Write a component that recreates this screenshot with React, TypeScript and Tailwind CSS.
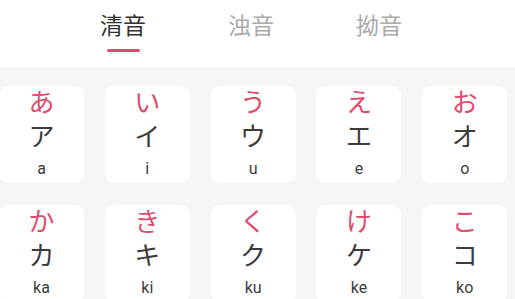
import React from "react";

const tabs = ["清音", "浊音", "拗音"];

const rows = [
  [
    { h: "あ", k: "ア", r: "a" },
    { h: "い", k: "イ", r: "i" },
    { h: "う", k: "ウ", r: "u" },
    { h: "え", k: "エ", r: "e" },
    { h: "お", k: "オ", r: "o" },
  ],
  [
    { h: "か", k: "カ", r: "ka" },
    { h: "き", k: "キ", r: "ki" },
    { h: "く", k: "ク", r: "ku" },
    { h: "け", k: "ケ", r: "ke" },
    { h: "こ", k: "コ", r: "ko" },
  ],
];

function KanaCard({ h, k, r }: { h: string; k: string; r: string }) {
  return (
    <div className="w-[85px] h-[97px] shrink-0 bg-white rounded-[9px] flex flex-col items-center">
      <div className="text-[26px] leading-[30px] text-[#e04c6d] font-['Noto_Sans_CJK_JP',sans-serif]">{h}</div>
      <div className="text-[26px] leading-[38px] text-[#3c3c3c] font-['Noto_Sans_CJK_JP',sans-serif]">{k}</div>
      <div className="text-[16px] leading-[30px] text-[#3c3c3c] font-['Roboto',sans-serif]">{r}</div>
    </div>
  );
}

export default function App() {
  const active = 0;
  return (
    <div className="w-[515px] h-[299px] overflow-hidden bg-[#f5f5f7]">
      <div className="h-[67px] bg-white flex pl-[59px] font-['Noto_Sans_CJK_SC',sans-serif]">
        {tabs.map((t, i) => (
          <div key={i} className="w-[128px] flex flex-col items-center pt-[9px]">
            <div className={`text-[23px] leading-[30px] ${i == active ? "text-[#333333]" : "text-[#ababab]"}`}>{t}</div>
            {i == active ? <div className="mt-[10px] w-[33px] h-[3px] rounded-full bg-[#e04c6d]"></div> : ""}
          </div>
        ))}
      </div>
      <div className="ml-[-1px] pt-[19px] flex flex-col gap-[22px]">
        {rows.map((row, i) => (
          <div key={i} className="flex gap-[20.8px]">
            {row.map((c) => (
              <KanaCard key={c.r} {...c} />
            ))}
          </div>
        ))}
      </div>
    </div>
  );
}
